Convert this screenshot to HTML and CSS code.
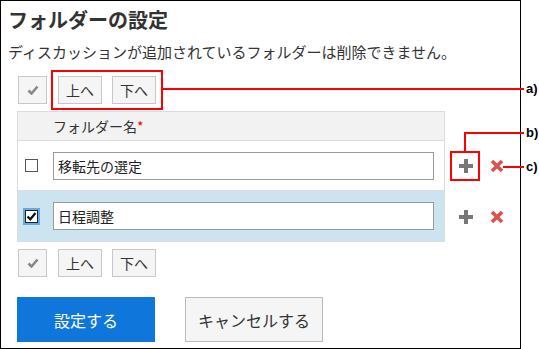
FILE: index.html
```html
<!DOCTYPE html>
<html lang="ja">
<head>
    <meta charset="UTF-8">
    <title>フォルダーの設定</title>
    <link rel="stylesheet" href="styles.css">
</head>
<body>
    <div class="page">
        <div class="frame">
            <h1>フォルダーの設定</h1>
            <p class="desc">ディスカッションが追加されているフォルダーは削除できません。</p>

            <div class="toolbar">
                <button class="tool check-all"><svg width="12" height="10" viewBox="0 0 12 10"><path d="M1.5 5.5 L4.5 8.5 L10.5 1.5" fill="none" stroke="#888" stroke-width="2.6"/></svg></button>
                <button class="tool">上へ</button>
                <button class="tool">下へ</button>
            </div>

            <div class="list">
                <div class="list-row">
                    <div class="cell head"><span class="head-label">フォルダー名<span class="req">*</span></span></div>
                </div>
                <div class="list-row">
                    <div class="cell">
                        <span class="chk"></span>
                        <input type="text" class="name" value="移転先の選定">
                    </div>
                    <div class="actions">
                        <svg class="icon" width="14" height="14" viewBox="0 0 14 14"><rect x="5" y="0" width="4" height="14" fill="#777"/><rect x="0" y="5" width="14" height="4" fill="#777"/></svg>
                        <svg class="icon" width="14" height="14" viewBox="0 0 14 14"><path d="M2 2 L12 12 M12 2 L2 12" stroke="#d9534f" stroke-width="3.6"/></svg>
                    </div>
                </div>
                <div class="list-row selected">
                    <div class="cell">
                        <span class="chk on"><svg width="11" height="11" viewBox="0 0 11 11"><path d="M1.5 5.5 L4.3 8.3 L9.5 2" fill="none" stroke="#111" stroke-width="2.2"/></svg></span>
                        <input type="text" class="name" value="日程調整">
                    </div>
                    <div class="actions">
                        <svg class="icon" width="14" height="14" viewBox="0 0 14 14"><rect x="5" y="0" width="4" height="14" fill="#777"/><rect x="0" y="5" width="14" height="4" fill="#777"/></svg>
                        <svg class="icon" width="14" height="14" viewBox="0 0 14 14"><path d="M2 2 L12 12 M12 2 L2 12" stroke="#d9534f" stroke-width="3.6"/></svg>
                    </div>
                </div>
            </div>

            <div class="toolbar bottom">
                <button class="tool check-all"><svg width="12" height="10" viewBox="0 0 12 10"><path d="M1.5 5.5 L4.5 8.5 L10.5 1.5" fill="none" stroke="#888" stroke-width="2.6"/></svg></button>
                <button class="tool">上へ</button>
                <button class="tool">下へ</button>
            </div>

            <div class="buttons">
                <button class="btn primary">設定する</button>
                <button class="btn">キャンセルする</button>
            </div>
        </div>

        <!-- callouts -->
        <div class="mark box-a"></div>
        <div class="mark line-a"></div>
        <div class="tag tag-a">a)</div>
        <div class="mark box-b"></div>
        <div class="mark line-b1"></div>
        <div class="mark line-b2"></div>
        <div class="tag tag-b">b)</div>
        <div class="mark line-c"></div>
        <div class="tag tag-c">c)</div>
    </div>
</body>
</html>
```

FILE: styles.css
```css
body {
    margin: 0;
    background: #fff;
    font-family: "Noto Sans CJK JP", "Noto Sans", sans-serif;
    color: #333;
}
.page {
    position: relative;
    width: 539px;
    height: 349px;
}
.frame {
    width: 521px;
    height: 349px;
    box-sizing: border-box;
    border: 1px solid #000;
    padding: 7px 0 0 7px;
}
h1 {
    margin: 0;
    font-size: 20px;
    line-height: 24px;
    font-weight: bold;
    color: #333;
}
.desc {
    margin: 9px 0 0;
    font-size: 15px;
    line-height: 22px;
}
.toolbar {
    display: flex;
    gap: 10px;
    margin: 13px 0 0 10px;
}
.toolbar.bottom {
    margin-top: 7px;
}
.tool {
    width: 44px;
    height: 28px;
    box-sizing: border-box;
    padding: 0;
    background: #f5f5f5;
    border: 1px solid #c8c8c8;
    font-family: inherit;
    font-size: 14px;
    color: #333;
    display: flex;
    align-items: center;
    justify-content: center;
}
.tool.check-all {
    width: 29px;
    margin-right: 1px;
}
.list {
    margin: 7px 0 0 9px;
}
.list-row {
    display: flex;
    align-items: center;
}
.cell {
    width: 428px;
    box-sizing: border-box;
    border: 1px solid #dcdcdc;
    border-bottom: none;
    height: 50px;
    display: flex;
    align-items: center;
    padding-left: 7px;
}
.list-row:last-child .cell {
    border-bottom: 1px solid #dcdcdc;
    height: 52px;
}
.cell.head {
    height: 29px;
    background: #f2f2f2;
    padding-left: 35px;
    font-size: 14px;
}
.req {
    color: #e00;
}
.selected .cell {
    background: #cce3f0;
}
.chk {
    width: 13px;
    height: 13px;
    box-sizing: border-box;
    border: 1px solid #555;
    background: #fff;
    display: flex;
    align-items: center;
    justify-content: center;
    flex: none;
}
.chk.on {
    border-color: #222;
    outline: 2px solid #6aa8e4;
}
.name {
    margin-left: 15px;
    width: 381px;
    height: 28px;
    box-sizing: border-box;
    border: 1px solid #999;
    padding: 0 4px;
    font-family: inherit;
    font-size: 14px;
    color: #222;
}
.actions {
    display: flex;
    gap: 17px;
    margin-left: 14px;
    padding-top: 1px;
}
.buttons {
    display: flex;
    gap: 30px;
    margin: 20px 0 0 9px;
}
.btn {
    width: 138px;
    height: 45px;
    box-sizing: border-box;
    border: 1px solid #bbb;
    background: #f5f5f5;
    font-family: inherit;
    font-size: 16px;
    color: #333;
}
.btn.primary {
    background: #0f76dc;
    border-color: #0f76dc;
    color: #fff;
}
.mark {
    position: absolute;
    box-sizing: border-box;
}
.box-a {
    left: 51px;
    top: 70px;
    width: 112px;
    height: 40px;
    border: 2px solid #f00;
}
.line-a {
    left: 163px;
    top: 88px;
    width: 361px;
    height: 2px;
    background: #f00;
}
.box-b {
    left: 450px;
    top: 151px;
    width: 30px;
    height: 30px;
    border: 2px solid #f00;
}
.line-b1 {
    left: 464px;
    top: 132px;
    width: 2px;
    height: 20px;
    background: #f00;
}
.line-b2 {
    left: 464px;
    top: 132px;
    width: 60px;
    height: 2px;
    background: #f00;
}
.line-c {
    left: 503px;
    top: 166px;
    width: 21px;
    height: 2px;
    background: #f00;
}
.tag {
    position: absolute;
    left: 526px;
    font-family: "Liberation Sans", Arial, sans-serif;
    font-weight: bold;
    font-size: 13px;
    line-height: 14px;
    color: #000;
}
.tag-a { top: 82px; }
.tag-b { top: 126px; }
.tag-c { top: 160px; }
```
